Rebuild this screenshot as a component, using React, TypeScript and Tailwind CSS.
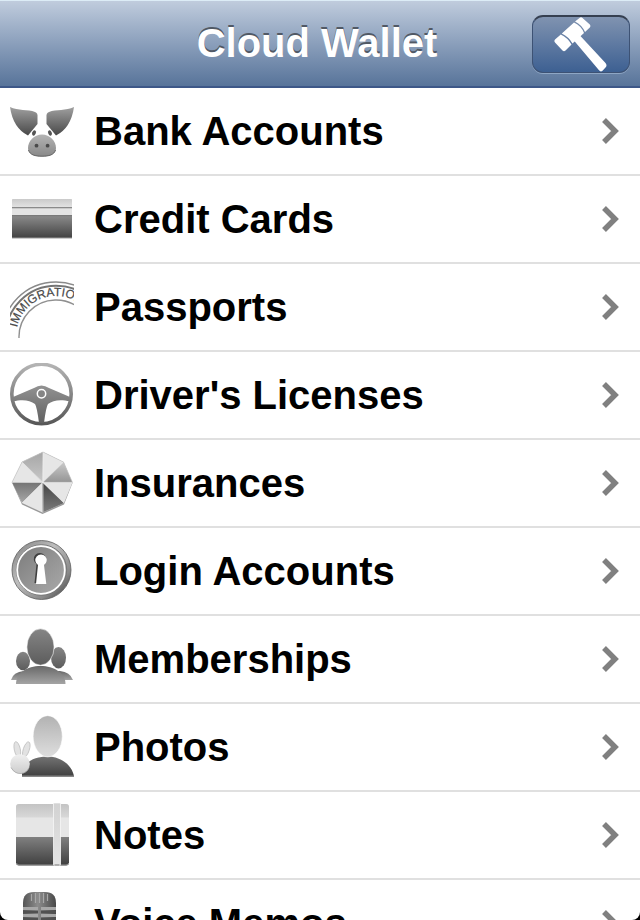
/**
 * App.tsx
 * Cloud Wallet home screen: navigation bar and the list of categories.
 */

import React from "react";

interface Category {
  id: string;
  label: string;
  icon: React.ReactNode;
}

interface GradientProps {
  id: string;
  from: string;
  to: string;
}

// Vertical fill shared by all category icons
const Gradient: React.FC<GradientProps> = ({ id, from, to }) => (
  <linearGradient id={id} x1="0" y1="0" x2="0" y2="1">
    <stop offset="0" stopColor={from} />
    <stop offset="1" stopColor={to} />
  </linearGradient>
);

const Icon: React.FC<{ children: React.ReactNode }> = ({ children }) => (
  <svg viewBox="0 0 64 64" className="size-16 shrink-0" aria-hidden="true">
    {children}
  </svg>
);

const PigIcon = () => (
  <Icon>
    <Gradient id="pig-ear" from="#a0a0a0" to="#484848" />
    <Gradient id="pig-snout" from="#b4b4b4" to="#888888" />
    <path d="M0 8C8 12 18 10 25 13Q28 14 27.500 18V25L18 36.500Q3 29 0 8Z" fill="url(#pig-ear)" />
    <path d="M64 8C56 12 46 10 39 13Q36 14 36.500 18V25L46 36.500Q61 29 64 8Z" fill="url(#pig-ear)" />
    <ellipse cx="24" cy="34" rx="1.800" ry="2.800" fill="#555" transform="rotate(25 24 34)" />
    <ellipse cx="40" cy="34" rx="1.800" ry="2.800" fill="#555" transform="rotate(-25 40 34)" />
    <path d="M32 35.500C40 35.500 46 42 46 49C46 55 40 57.500 32 57.500S18 55 18 49C18 42 24 35.500 32 35.500Z" fill="url(#pig-snout)" />
    <path d="M18.500 51C20 56 25 57.200 32 57.200S44 56 45.500 51" fill="none" stroke="#666" strokeWidth="1" />
    <circle cx="26.500" cy="46.700" r="1.900" fill="#4a4a4a" />
    <circle cx="37.600" cy="46.700" r="1.900" fill="#4a4a4a" />
  </Icon>
);

const CardIcon = () => (
  <Icon>
    <Gradient id="card-top" from="#cacaca" to="#e2e2e2" />
    <Gradient id="card-base" from="#8c8c8c" to="#424242" />
    <rect x="2" y="12" width="60" height="39" rx="1" fill="#e4e4e4" />
    <rect x="2" y="12" width="60" height="8" rx="1" fill="url(#card-top)" />
    <rect x="2" y="20" width="60" height="1.300" fill="#8a8a8a" />
    <rect x="2" y="28.500" width="60" height="22.500" fill="url(#card-base)" />
    <rect x="2" y="28" width="60" height="1.200" fill="#7a7a7a" />
    <rect x="2" y="50.500" width="60" height="1" fill="#999" />
  </Icon>
);

const PassportIcon = () => (
  <Icon>
    <circle cx="46" cy="61" r="54" fill="none" stroke="#8a8a8a" strokeWidth="1.400" />
    <circle cx="46" cy="61" r="50.300" fill="none" stroke="#747474" strokeWidth="2" />
    <path d="M9 63A37 37 0 0 1 83 61" fill="none" stroke="#909090" strokeWidth="1.400" />
    <path id="stamp-arc" d="M7 52.500A40 40 0 0 1 46 21A40 40 0 0 1 86 61" fill="none" />
    <text
      fontFamily="Liberation Sans, sans-serif"
      fontSize="12"
      fontWeight="400"
      fill="#4a4a4a"
      stroke="#4a4a4a"
      strokeWidth=".2"
    >
      <textPath href="#stamp-arc">IMMIGRATION</textPath>
    </text>
  </Icon>
);

const WheelIcon = () => (
  <Icon>
    <Gradient id="wheel-rim" from="#b4b4b4" to="#585858" />
    <Gradient id="wheel-spoke" from="#929292" to="#606060" />
    <circle cx="31.500" cy="31" r="29.700" fill="none" stroke="url(#wheel-rim)" strokeWidth="3.600" />
    <path
      d="M3 34L24 25Q31.500 20 39 25L60 34V38.500C51 36 43 37 38 41Q36 44 34 60H29Q27 44 25 41C20 37 12 36 3 38.500Z"
      fill="url(#wheel-spoke)"
    />
    <circle cx="31.500" cy="30.700" r="4.200" fill="#858585" stroke="#fff" strokeWidth="1.500" />
  </Icon>
);

const UmbrellaIcon = () => (
  <Icon>
    <Gradient id="panel-mid" from="#a6a6a6" to="#c8c8c8" />
    <Gradient id="panel-right" from="#cacaca" to="#949494" />
    <Gradient id="panel-left" from="#747474" to="#a8a8a8" />
    <Gradient id="panel-dark" from="#444444" to="#7c7c7c" />
    <path d="M33 1L53.500 11L62.500 32L54 53.500L32.500 63L12 53.500L2 31.500L12 11Z" fill="#999" />
    <path d="M33 1L53.500 11L62.500 31.500L54 52L32.500 61.500L12 52L2 31.300L12 11Z" fill="#e6e6e6" />
    <path d="M32.500 31.500L12 11L33 1Z" fill="url(#panel-mid)" />
    <path d="M32.500 31.500L53.500 11L62.500 31.500Z" fill="url(#panel-right)" />
    <path d="M32.500 31.500L2 31.300L12 52Z" fill="url(#panel-left)" />
    <path d="M32.500 31.500V61.500L54 52Z" fill="url(#panel-dark)" />
    <path d="M33 1V61.500M12 11L54 52M53.500 11L12 52M2 31.400H62.500" stroke="#f2f2f2" strokeWidth=".6" />
    <path d="M2 31.300L12 11L33 1L53.500 11L62.500 31.500" fill="none" stroke="#c4c4c4" strokeWidth=".6" />
  </Icon>
);

const LockIcon = () => (
  <Icon>
    <linearGradient id="lock-rim" x1="0" y1="0" x2="1" y2="1">
      <stop offset="0" stopColor="#7c7c7c" />
      <stop offset=".4" stopColor="#bdbdbd" />
      <stop offset=".75" stopColor="#888" />
      <stop offset="1" stopColor="#333" />
    </linearGradient>
    <linearGradient id="lock-face" x1="0" y1="0" x2="1" y2="1">
      <stop offset="0" stopColor="#7c7c7c" />
      <stop offset="1" stopColor="#aaa" />
    </linearGradient>
    <circle cx="31.500" cy="31" r="29.500" fill="url(#lock-rim)" stroke="#5c5c5c" strokeWidth=".8" />
    <circle cx="31.500" cy="31" r="25.200" fill="none" stroke="#777" strokeWidth="1" />
    <circle cx="31" cy="31" r="23.800" fill="url(#lock-face)" stroke="#fff" strokeWidth="1.800" />
    <path d="M27.500 26A6 6 0 1 1 34 26L36 45H25.500Z" fill="#3f3f3f" transform="translate(-1 -1)" />
    <path d="M28 26A5.700 5.700 0 1 1 34 26L36.300 45H26Z" fill="#fff" />
  </Icon>
);

const PeopleIcon = () => (
  <Icon>
    <Gradient id="people-head" from="#858585" to="#5c5c5c" />
    <Gradient id="people-body" from="#686868" to="#a4a4a4" />
    <path d="M1 53Q3 45 14 44H50Q60 45 63 53Z" fill="url(#people-body)" />
    <ellipse cx="13" cy="34" rx="7" ry="9.200" fill="url(#people-head)" />
    <ellipse cx="48.500" cy="30.700" rx="7.500" ry="10.700" fill="url(#people-head)" />
    <path d="M6 57C6 46 17 39 30.500 39S55.500 46 55.500 57Z" fill="url(#people-body)" />
    <ellipse cx="30.500" cy="20" rx="13.600" ry="18.200" fill="url(#people-head)" stroke="#fff" strokeWidth=".6" />
  </Icon>
);

const PhotoIcon = () => (
  <Icon>
    <Gradient id="photo-head" from="#b2b2b2" to="#dedede" />
    <Gradient id="photo-body" from="#737373" to="#3f3f3f" />
    <Gradient id="photo-hand" from="#f0f0f0" to="#cccccc" />
    <path d="M12 61.500V53C18 45 27 41.500 38 41.500S62 49 64 61.500Z" fill="url(#photo-body)" />
    <rect x="12" y="60.500" width="52" height="1.500" fill="#888" />
    <ellipse cx="37.700" cy="21.300" rx="14.600" ry="20.600" fill="url(#photo-head)" stroke="#fff" strokeWidth=".6" />
    <g fill="#e2e2e2" stroke="#c0c0c0" strokeWidth=".8">
      <ellipse cx="7.300" cy="34.500" rx="3" ry="8" transform="rotate(-12 7.300 34.500)" />
      <ellipse cx="16.300" cy="34.500" rx="3" ry="8" transform="rotate(18 16.300 34.500)" />
    </g>
    <circle cx="10" cy="49" r="9.800" fill="url(#photo-hand)" />
    <path d="M1 52.500Q5 59 11 58.500T19 52.500" fill="none" stroke="#aaa" strokeWidth=".8" />
  </Icon>
);

const NotesIcon = () => (
  <Icon>
    <Gradient id="notes-top" from="#c4c4c4" to="#d8d8d8" />
    <Gradient id="notes-base" from="#808080" to="#3f3f3f" />
    <Gradient id="notes-strap" from="#d2d2d2" to="#e4e4e4" />
    <rect x="6" y="1" width="53" height="61.500" rx="3" fill="#e6e6e6" />
    <path d="M6 14.500V4Q6 1 9 1H56Q59 1 59 4V14.500Z" fill="url(#notes-top)" />
    <path d="M6 34H59V59.500Q59 62.500 56 62.500H9Q6 62.500 6 59.500Z" fill="url(#notes-base)" />
    <path d="M6.500 60Q7 62 9 62H56Q58.500 62 58.700 60" fill="none" stroke="#aaa" strokeWidth=".8" />
    <rect x="43.500" y="0" width="7" height="62.500" rx="1" fill="url(#notes-strap)" stroke="#f6f6f6" strokeWidth=".8" />
    <rect x="44.500" y="61.500" width="5" height="1" fill="#777" />
  </Icon>
);

const MicIcon = () => (
  <Icon>
    <linearGradient id="mic" x1="0" y1="0" x2="1" y2="0">
      <stop offset="0" stopColor="#555" />
      <stop offset=".45" stopColor="#8c8c8c" />
      <stop offset="1" stopColor="#484848" />
    </linearGradient>
    <path d="M13 64V12Q13 1 24 1H35Q46 1 46 12V64Z" fill="url(#mic)" />
    <path d="M21.500 3V10M25.500 2V12M29.500 2V12M33.500 2V12M37.500 3V10" stroke="#a8a8a8" strokeWidth="1.200" />
    <path d="M13 17.500H28M31 17.500H46M13 24.500H28M31 24.500H46M13 31.500H46" stroke="#a8a8a8" strokeWidth="3" />
    <path d="M13 21H28M31 21H46M13 28H28M31 28H46" stroke="#505050" strokeWidth="2.500" />
  </Icon>
);

const GavelIcon = () => (
  <svg viewBox="1 2 96 55" className="h-full w-full" fill="#fff" aria-hidden="true">
    <path d="M41.500 25L47.500 20L73.500 48Q75.500 50.500 73.500 52.500L70.500 55.800Q68.500 57.500 66.800 55Z" />
    <path d="M43 6.500L47.500 3Q49 1.500 50.500 3L57.800 9.500Q59 11 57.800 12.500L53 17Q50 10 43 6.500Z" />
    <path d="M29.800 18.500L42 7.500Q49.500 11 52 18L40.500 28.500Q37 22 29.800 18.500Z" />
    <path d="M28.800 19.500L23 24.500Q21.500 26 23 27.500L30.500 35.500Q32 37 33.500 35.500L39.500 29.500Q36 23 28.800 19.500Z" />
  </svg>
);

const CATEGORIES: Category[] = [
  { id: "bank", label: "Bank Accounts", icon: <PigIcon /> },
  { id: "cards", label: "Credit Cards", icon: <CardIcon /> },
  { id: "passports", label: "Passports", icon: <PassportIcon /> },
  { id: "licenses", label: "Driver's Licenses", icon: <WheelIcon /> },
  { id: "insurances", label: "Insurances", icon: <UmbrellaIcon /> },
  { id: "logins", label: "Login Accounts", icon: <LockIcon /> },
  { id: "memberships", label: "Memberships", icon: <PeopleIcon /> },
  { id: "photos", label: "Photos", icon: <PhotoIcon /> },
  { id: "notes", label: "Notes", icon: <NotesIcon /> },
  { id: "memos", label: "Voice Memos", icon: <MicIcon /> },
];

const App: React.FC = () => {
  return (
    <div className="h-screen bg-black font-['Liberation_Sans',Arial,sans-serif] font-bold">
      <div className="flex h-full flex-col overflow-hidden rounded-b-lg bg-white">
        {/* Navigation bar */}
        <header className="grid h-22 shrink-0 grid-cols-[1fr_auto_1fr] items-center border-t-1 border-b-2 border-t-[#dcecf6] border-b-[#3d5788] bg-linear-to-b from-[#c0ccdd] to-[#58749a] pr-2.5 pl-2">
          <h1 className="col-start-2 pr-1 pb-0.5 text-[40px] leading-12 text-white [text-shadow:0_-2px_0_#515965]">
            Cloud Wallet
          </h1>
          <button
            type="button"
            aria-label="Tools"
            className="h-[58px] w-[98px] justify-self-end rounded-[11px] border border-t-2 border-[#3d5274] border-t-[#353f50] bg-linear-to-b from-[#8093b0] to-[#3d6092] shadow-[0_1px_0_#8ea6c4]"
          >
            <GavelIcon />
          </button>
        </header>

        {/* Category list */}
        <ul className="min-h-0 flex-1 overflow-hidden">
          {CATEGORIES.map((category) => (
            <li key={category.id} className="border-b-2 border-[#e0e0e0]">
              <button
                type="button"
                className="flex h-[86px] w-full items-center gap-5 pr-5 pl-2.5 text-left"
              >
                {category.icon}
                <span className="flex-1 text-[40px] leading-12 text-black">
                  {category.label}
                </span>
                <svg viewBox="0 0 20 28" className="h-7 w-5 shrink-0" aria-hidden="true">
                  <path d="M4 3L15 14L4 25" fill="none" stroke="#808080" strokeWidth="5.500" />
                </svg>
              </button>
            </li>
          ))}
        </ul>
      </div>
    </div>
  );
};

export default App;
